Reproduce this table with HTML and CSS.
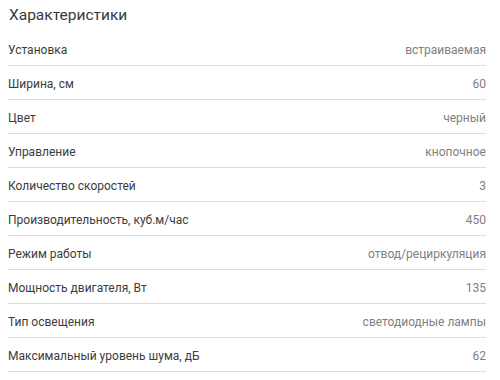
FILE: index.html
```html
<!DOCTYPE html>
<html lang="ru">
<head>
<meta charset="utf-8">
<link rel="stylesheet" href="styles.css">
</head>
<body>
<section class="specs">
  <h2 class="specs-title">Характеристики</h2>
  <div class="spec-row"><span class="spec-name">Установка</span><span class="spec-value">встраиваемая</span></div>
  <div class="spec-row"><span class="spec-name">Ширина, см</span><span class="spec-value">60</span></div>
  <div class="spec-row"><span class="spec-name">Цвет</span><span class="spec-value">черный</span></div>
  <div class="spec-row"><span class="spec-name">Управление</span><span class="spec-value">кнопочное</span></div>
  <div class="spec-row"><span class="spec-name">Количество скоростей</span><span class="spec-value">3</span></div>
  <div class="spec-row"><span class="spec-name">Производительность, куб.м/час</span><span class="spec-value">450</span></div>
  <div class="spec-row"><span class="spec-name">Режим работы</span><span class="spec-value">отвод/рециркуляция</span></div>
  <div class="spec-row"><span class="spec-name">Мощность двигателя, Вт</span><span class="spec-value">135</span></div>
  <div class="spec-row"><span class="spec-name">Тип освещения</span><span class="spec-value">светодиодные лампы</span></div>
  <div class="spec-row"><span class="spec-name">Максимальный уровень шума, дБ</span><span class="spec-value">62</span></div>
</section>
</body>
</html>
```
FILE: styles.css
```css
html, body {
  margin: 0;
  padding: 0;
  background: #ffffff;
}
body {
  font-family: Roboto, "Noto Sans", "Liberation Sans", sans-serif;
  color: #3a3a3a;
}
.specs {
  width: 478px;
  margin-left: 8px;
}
.specs-title {
  margin: 0;
  padding-left: 1px;
  height: 32px;
  line-height: 31px;
  font-size: 15.5px;
  font-weight: 400;
  color: #3a3a3a;
}
.spec-row {
  display: flex;
  justify-content: space-between;
  align-items: center;
  height: 31px;
  padding-top: 2px;
  border-bottom: 1px solid #dcdcdc;
  font-size: 12px;
}
.spec-name {
  color: #3c3c3c;
}
.spec-value {
  color: #808080;
}
```
